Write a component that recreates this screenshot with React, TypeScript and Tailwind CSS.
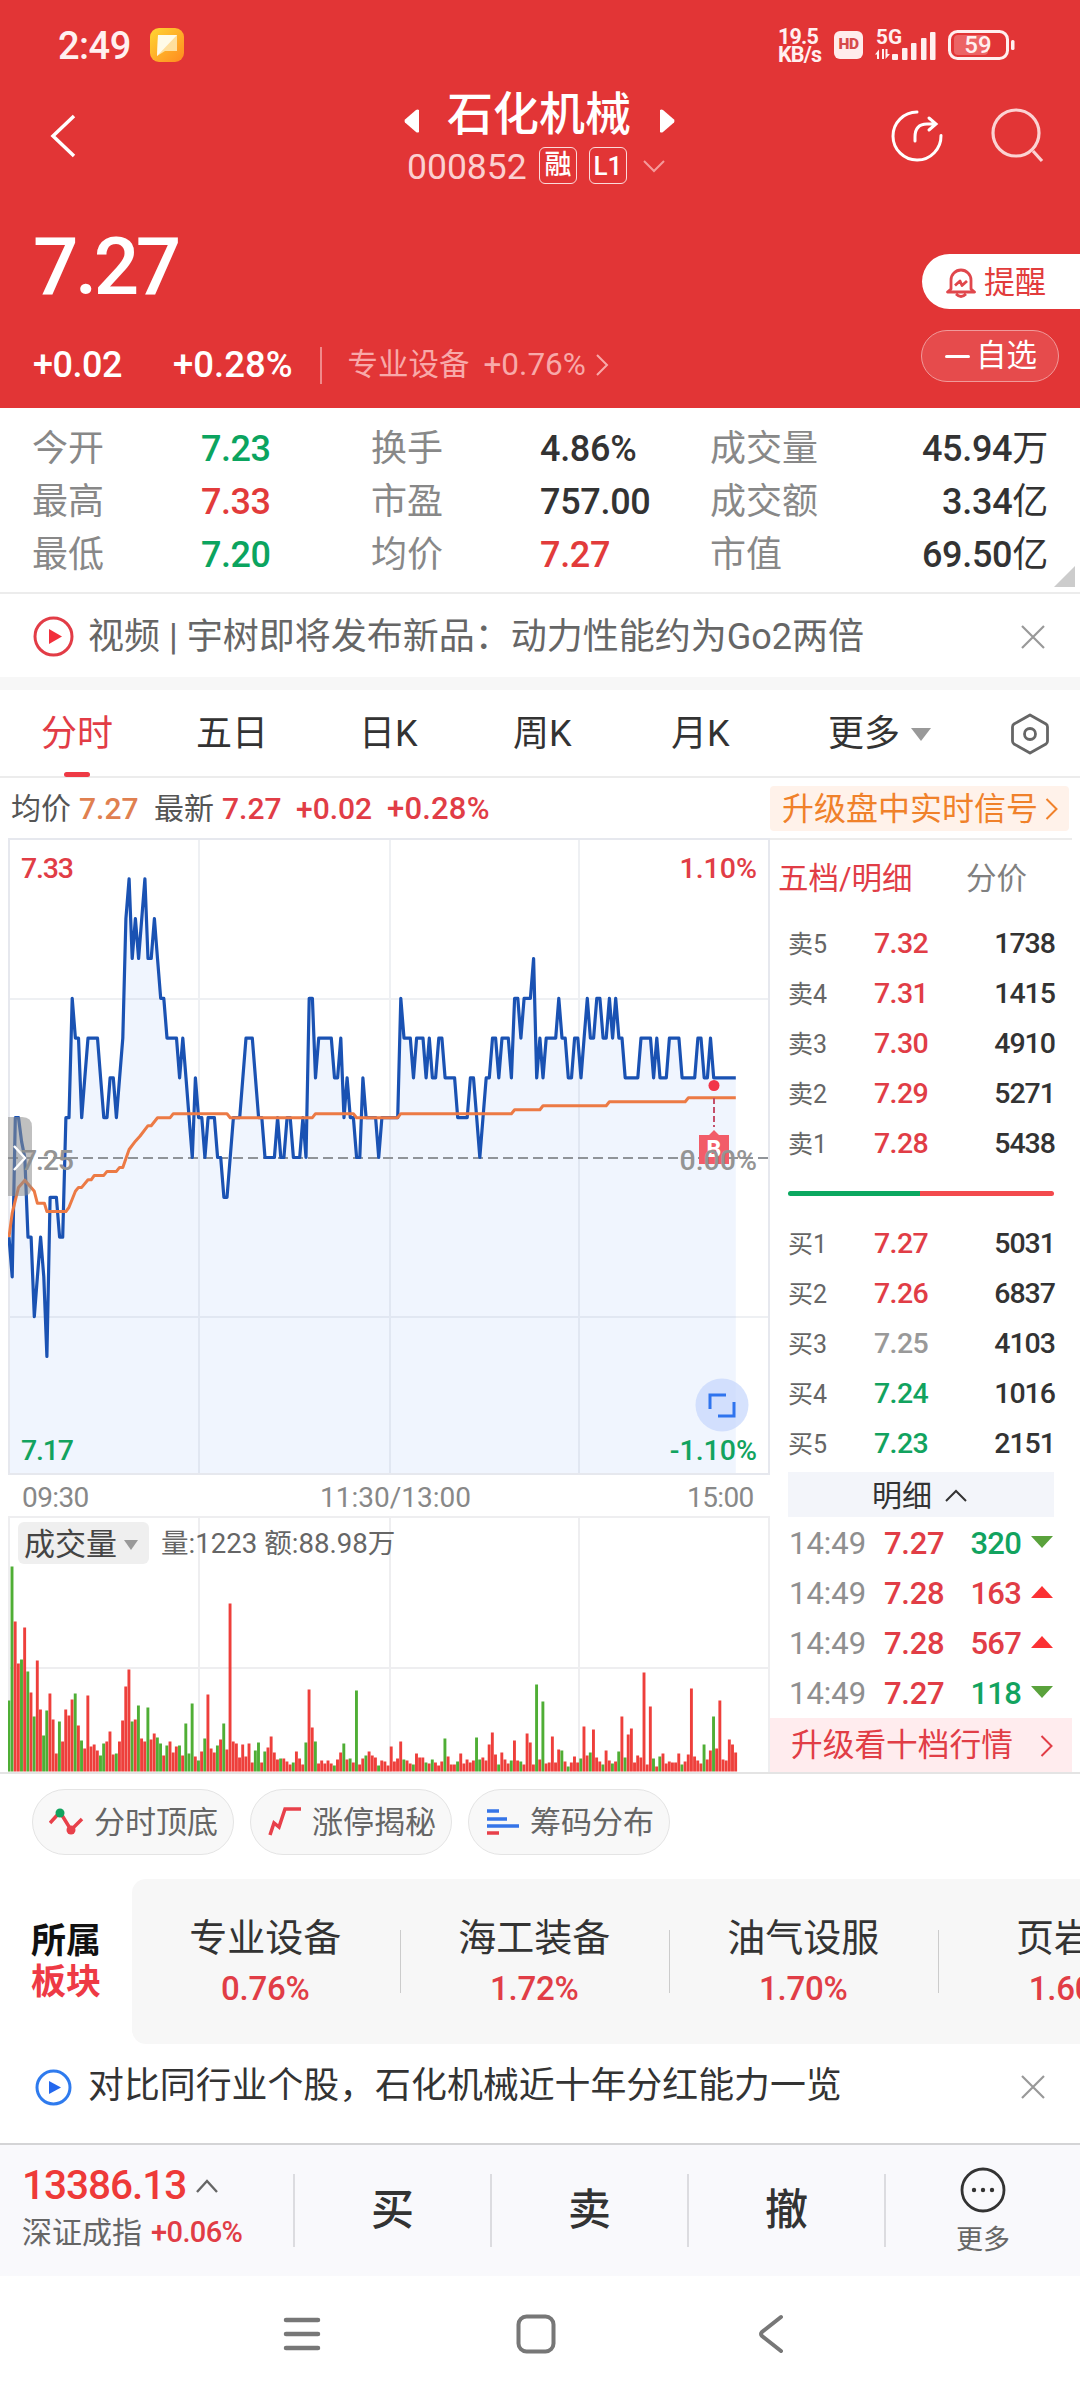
import React from "react";

// [minute of the session, ticks above/below the previous close of 7.25]
const price = [
  [0, -2], [1, -3], [2, 1], [3, 1], [4, 0.4], [5, 0], [6, -2], [7, -2], [8, -4], [9, -3], [10, -2], [11, -3], [12, -5],
  [13, -1], [15, -1], [16, -2], [17, -2], [18, 1], [19, 1], [20, 4], [21, 3], [22, 3], [23, 1], [24, 2], [25, 3], [28, 3],
  [29, 2], [30, 1], [31, 1], [32, 2], [33, 2], [34, 1], [35, 2], [36, 3], [37, 6], [38, 7], [39, 5], [40, 6], [41, 5],
  [43, 7], [44, 5], [45, 5], [46, 6], [47, 5], [48, 4], [49, 4], [50, 3], [53, 3], [54, 2], [55, 3], [56, 2], [57, 1],
  [58, 0], [59, 2], [60, 1], [61, 1], [62, 0], [63, 1], [65, 1], [66, 0], [67, 0], [68, -1], [69, -1], [71, 1], [73, 1],
  [75, 3], [77, 3], [79, 1], [80, 1], [81, 0], [84, 0], [85, 1], [86, 0], [87, 0], [88, 1], [89, 1], [90, 0], [92, 0],
  [93, 1], [94, 0], [95, 4], [96, 4], [97, 2], [98, 3], [102, 3], [103, 2], [104, 2], [105, 3], [106, 1], [107, 2],
  [108, 1], [109, 1], [110, 0], [111, 0], [112, 2], [113, 1], [116, 1], [117, 0], [118, 1], [123, 1], [124, 4],
  [125, 3], [127, 3], [128, 2], [129, 3], [131, 3], [132, 2], [133, 3], [134, 2], [135, 2], [136, 3], [137, 3],
  [138, 2], [141, 2], [142, 1], [145, 1], [146, 2], [147, 2], [148, 1], [149, 0], [150, 1], [151, 2], [152, 2],
  [153, 3], [154, 3], [155, 2], [156, 3], [158, 3], [159, 2], [160, 4], [161, 4], [162, 3], [163, 4], [165, 4],
  [166, 5], [167, 2], [168, 3], [169, 2], [170, 3], [173, 3], [174, 4], [175, 3], [176, 3], [177, 2], [178, 2],
  [179, 3], [180, 3], [181, 2], [182, 3], [183, 4], [184, 3], [185, 3], [186, 4], [187, 4], [188, 3], [189, 3],
  [190, 4], [191, 3], [192, 4], [193, 3], [194, 3], [195, 2], [199, 2], [200, 3], [203, 3], [204, 2], [205, 3],
  [206, 2], [208, 2], [209, 3], [212, 3], [213, 2], [217, 2], [218, 3], [219, 3], [220, 2], [221, 2], [222, 3],
  [223, 2], [230, 2],
];

const average = [
  [0, -2], [1, -1.4], [3, -0.75], [5, -0.57], [8, -0.85], [9, -1.15], [11.2, -1.15], [12, -1.36], [18, -1.36],
  [19, -1.25], [21, -0.85], [22, -0.75], [23, -0.75], [25, -0.56], [26, -0.56], [27, -0.45], [30, -0.45],
  [31, -0.35], [34, -0.35], [35, -0.25], [36, -0.25], [38, 0.2], [40, 0.41], [41.5, 0.54], [44, 0.8], [45, 0.8],
  [47, 1], [51, 1], [52, 1.1], [69, 1.1], [70, 1], [96, 1], [97, 1.1], [109, 1.1], [110, 1], [123, 1], [124, 1.1],
  [159, 1.1], [160, 1.2], [168, 1.2], [169, 1.3], [189, 1.3], [190, 1.4], [214, 1.4], [215, 1.5], [230, 1.5],
];

// one entry per minute, "g" marks a falling minute
const volumes = `71g 205g 150 108 112g 144 100g 79 55g 111 62 36g 61g 78 52 18 50g 30 62 56 72 78g 46 31g 23 76 25 27 21
16g 28g 30 40 17 18g 30 51 85 102 50g 52 66g 33 30 64g 32 38 34g 28g 16 26g 30 19 25 26g 16 48g 18g 68g 15
11g 20 33g 77 23 19 26g 32 48g 22 168 30 28 14 27 15 28 9 21g 29g 9 20g 24 35 19 12 13g 13 10 7
9g 20 13 7 29g 82 44 30g 8 11 8 11 8 6g 12 19 28g 12 13g 9 81g 7 13 16g 20 16 14 6g 11 10
6 25 10 13 30 12g 11 8 7g 18 14 14 9g 8 12g 9 6 10 33g 15 7 7 10g 18 8 12 9 11 34g 12g
14 11 27 39 17 7g 19 12 8 11g 31 11 10g 7 38 29 7 87g 12 70g 8 9 35 9 22 21g 10 5g 9 15
9 13g 45 16 19g 42 14 10 7g 21 11 8g 10 20g 55 14g 37 43 9 16 14 99 7 65 13g 5 15g 18 8 10
9 9 18 7g 10 17 83 15 11 8 27g 12 21 55g 23 71 12 11 32 27 19`.split(/\s+/);

const toPoints = (data: number[][]) =>
  data.map(([m, t]) => `${(1 + m * 3.16).toFixed(1)},${(319.5 - t * 39.8).toFixed(1)}`).join(" ");

const stats = [
  ["今开", "7.23", "text-[#0ba45f]", "换手", "4.86%", "text-[#333]", "成交量", "45.94万"],
  ["最高", "7.33", "text-[#e23b3b]", "市盈", "757.00", "text-[#333]", "成交额", "3.34亿"],
  ["最低", "7.20", "text-[#0ba45f]", "均价", "7.27", "text-[#e23b3b]", "市值", "69.50亿"],
];

const RED = "text-[#e13d46]";
const GREEN = "text-[#12a35f]";

const sells = [
  ["卖5", "7.32", RED, "1738"],
  ["卖4", "7.31", RED, "1415"],
  ["卖3", "7.30", RED, "4910"],
  ["卖2", "7.29", RED, "5271"],
  ["卖1", "7.28", RED, "5438"],
];

const buys = [
  ["买1", "7.27", RED, "5031"],
  ["买2", "7.26", RED, "6837"],
  ["买3", "7.25", "text-[#999]", "4103"],
  ["买4", "7.24", GREEN, "1016"],
  ["买5", "7.23", GREEN, "2151"],
];

const trades = [
  { price: "7.27", qty: "320", up: false },
  { price: "7.28", qty: "163", up: true },
  { price: "7.28", qty: "567", up: true },
  { price: "7.27", qty: "118", up: false },
];

const sectors = [
  ["专业设备", "0.76%"],
  ["海工装备", "1.72%"],
  ["油气设服", "1.70%"],
  ["页岩气", "1.60%"],
];

const StatusBar = () => (
  <div className="flex h-[90px] items-center pl-[58px] pr-[65px] font-medium text-[#fff0f0]">
    <span className="mt-[3px] w-[92px] text-[38px] tracking-[-0.5px]">2:49</span>
    <svg width="34" height="34" viewBox="0 0 34 34">
      <defs>
        <linearGradient id="note" x1="0" y1="0" x2="1" y2="1">
          <stop offset="0" stopColor="#ffd633" />
          <stop offset="1" stopColor="#ff8a1f" />
        </linearGradient>
      </defs>
      <rect width="34" height="34" rx="9" fill="url(#note)" />
      <path d="M8 7h19v16H15l-8 5z" fill="#ffdf9d" />
      <path d="M8 7h19L7 28z" fill="#fffbe8" />
    </svg>
    <div className="ml-auto mt-[2px] flex w-[56px] flex-col text-[21.500px] font-bold leading-[18px] tracking-[-0.8px]">
      <span>19.5</span>
      <span>KB/s</span>
    </div>
    <span className="flex h-[28px] w-[29px] items-center justify-center rounded-[6px] bg-[#ffecec] text-[15.500px] font-black tracking-[-0.5px] text-[#d64a4a]">
      HD
    </span>
    <svg className="ml-[12px] shrink-0" width="61" height="32" viewBox="0 0 61 32" fill="#fff0f0">
      <text x="1" y="15" fontSize="20.500" fontWeight="700" textLength="26" lengthAdjust="spacingAndGlyphs">5G</text>
      <path d="M0 25.500l4-5V30H2v-4.500zM7 20h2v10H7zM10.500 20h2v5H15l-4.500 5z" />
      <rect x="17" y="25" width="6" height="6" rx="1" />
      <rect x="27" y="19" width="5.500" height="12" rx="1" />
      <rect x="36" y="14" width="5.500" height="17" rx="1" />
      <rect x="46" y="9" width="5.500" height="22" rx="1" />
      <rect x="55" y="3" width="5.500" height="28" rx="1" />
    </svg>
    <svg className="ml-[12px] shrink-0" width="67" height="30" viewBox="0 0 67 30">
      <rect x="1.5" y="1.5" width="58" height="27" rx="8" fill="none" stroke="#fff0f0" strokeWidth="3" />
      <rect x="6" y="5" width="34" height="20" rx="4" fill="#ec6465" />
      <rect x="63" y="10" width="3.500" height="10" rx="1.500" fill="#fff0f0" />
      <text x="30" y="23" textAnchor="middle" fontSize="24" fontWeight="500" fill="#fff0f0">59</text>
    </svg>
  </div>
);

const TitleBar = () => (
  <div className="flex h-[110px] items-start text-white">
    <svg className="ml-[48px] mt-[23px] shrink-0" width="30" height="46" fill="none" stroke="#fff" strokeWidth="3.5">
      <path d="M26 3L5 23l21 20" />
    </svg>
    <div className="ml-[326px] flex w-[272px] flex-col items-center">
      <div className="flex h-[50px] w-full items-center justify-between">
        <svg width="15" height="24" className="mt-[12px]" fill="#fff"><path d="M15 1v22q-1.500 1-3 0L1 13.500q-1-1.500 0-3L12 1q1.500-1 3 0" /></svg>
        <span className="-mt-[3px] text-[46px] font-medium leading-none">石化机械</span>
        <svg width="17" height="24" className="mt-[12px]" fill="#fff"><path d="M1 1v22q1.500 1 3 0l11-9.500q1-1.500 0-3L4 1q-1.500-1-3 0" /></svg>
      </div>
      <div className="mt-[7px] flex h-[37px] w-full items-center pl-[3px] leading-none">
        <span className="mt-[4px] w-[132px] text-[35.500px] font-normal text-[#fbd0d0]">000852</span>
        <span className="flex h-[37px] w-[38px] items-center justify-center rounded-[6px] border-[1.500px] border-[#fbdada] text-[27px] font-medium">融</span>
        <span className="ml-[12px] flex h-[37px] w-[38px] items-center justify-center rounded-[6px] border-[1.500px] border-[#fbdada] text-[26px] font-medium">L1</span>
        <svg className="ml-[15px] mt-[1px]" width="24" height="13" fill="none" stroke="#f59a9a" strokeWidth="2"><path d="M2 1l10 10L22 1" /></svg>
      </div>
    </div>
    <svg className="ml-[214px] mt-[19px] shrink-0" width="54" height="54" fill="none" stroke="#fff" strokeWidth="3">
      <path d="M27 3A24 24 0 1 0 51 26.500M25 32v-4c0-9 4-13 12-13h8M39 9l7 6-7 6" strokeLinecap="round" />
    </svg>
    <svg className="ml-[46px] mt-[17px] shrink-0" width="56" height="58" fill="none" stroke="#fbd3d3" strokeWidth="3.200">
      <circle cx="26" cy="26" r="23" />
      <path d="M43 44l9 10" />
    </svg>
  </div>
);

const PriceHeader = () => (
  <div className="flex h-[208px] text-white">
    <div className="flex flex-col pl-[33px]">
      <span className="mt-[27px] text-[80px] font-medium leading-[80px] tracking-[-3.500px]">7.27</span>
      <div className="mt-[36px] flex h-[44px] items-center">
        <span className="w-[140px] text-[36px] font-medium tracking-[-0.5px]">+0.02</span>
        <span className="w-[147px] text-[36.500px] font-medium">+0.28%</span>
        <span className="h-[37px] w-[1.500px] bg-[#f08a8a]" />
        <span className="ml-[26px] text-[30.500px] text-[#f8a9a9]">专业设备</span>
        <span className="ml-[14px] text-[31.500px] text-[#f8a9a9]">+0.76%</span>
        <svg className="ml-[9px]" width="14" height="22" fill="none" stroke="#f8a9a9" strokeWidth="2"><path d="M2 1l10 10L2 21" /></svg>
      </div>
    </div>
    <div className="ml-auto flex flex-col items-end">
      <div className="mt-[54px] flex h-[55px] w-[158px] items-center rounded-l-full bg-white pl-[24px] pt-[2px] text-[31px] leading-none text-[#e23c3c]">
        <svg className="mr-[8px]" width="30" height="32" viewBox="0 0 30 32" fill="none" stroke="#e0474c" strokeWidth="2.800">
          <path d="M1.500 25l3.500-3V13a10 10 0 0 1 20 0v9l3.500 3zM10 27q5 5 10 0M9 18.500l5-4.500 2 4.500 5-4.500" strokeLinejoin="round" />
        </svg>
        提醒
      </div>
      <div className="mr-[21px] mt-[21px] flex h-[52px] w-[138px] items-center rounded-full border-[1.500px] border-[#f09a9a] bg-[#e64b4c] pl-[23px] text-[30.500px] leading-none">
        <span className="mr-[6px] h-[3px] w-[25px] rounded-full bg-white" />
        自选
      </div>
    </div>
  </div>
);

const CloseIcon = () => (
  <svg width="24" height="24" fill="none" stroke="#999" strokeWidth="2.200"><path d="M1 1l22 22M23 1L1 23" /></svg>
);

const Chevron = ({ color }: { color: string }) => (
  <svg width="13" height="22" fill="none" stroke={color} strokeWidth="2"><path d="M1.500 1l10 10-10 10" /></svg>
);

const Stats = () => (
  <div className="relative h-[184px] pt-[14px]">
    {stats.map((s) => (
      <div key={s[0]} className="flex h-[53px] items-center pl-[32px] pr-[32px] text-[36px] leading-none">
        <span className="w-[169px] text-[#888]">{s[0]}</span>
        <span className={`w-[170px] font-medium tracking-[-0.500px] ${s[2]}`}>{s[1]}</span>
        <span className="w-[169px] text-[#888]">{s[3]}</span>
        <span className={`w-[170px] font-medium tracking-[-0.300px] ${s[5]}`}>{s[4]}</span>
        <span className="text-[#888]">{s[6]}</span>
        <span className="ml-auto font-medium tracking-[-0.300px] text-[#333]">{s[7].slice(0, -1)}<span className="font-normal">{s[7].slice(-1)}</span></span>
      </div>
    ))}
    <svg className="absolute bottom-[5px] right-[5px]" width="21" height="21"><path d="M21 0v21H0z" fill="#ccc" /></svg>
  </div>
);

const Tabs = () => (
  <div className="flex h-[88px] items-center border-b-2 border-[#ececec] pt-[2px] text-[36px] leading-none text-[#333]">
    <div className="relative ml-[41px] w-[155px] text-[#e23c46]">
      分时
      <span className="absolute -bottom-[25px] left-[23px] h-[5px] w-[26px] rounded-sm bg-[#ee3a45]" />
    </div>
    <span className="w-[163px]">五日</span>
    <span className="w-[154px]">日K</span>
    <span className="w-[158px]">周K</span>
    <span className="w-[157px]">月K</span>
    <span>更多</span>
    <svg className="ml-[11px]" width="20" height="13"><path d="M0 0h20L10 13z" fill="#999" /></svg>
    <svg className="ml-[80px]" width="38" height="42" fill="none" stroke="#666" strokeWidth="2.800">
      <path d="M19 2L35 11q1.500 1 1.500 3v14q0 2-1.500 3L19 40 3 31q-1.500-1-1.500-3V14q0-2 1.500-3z" strokeLinejoin="round" />
      <circle cx="19" cy="21" r="5.500" />
    </svg>
  </div>
);

const InfoRow = () => (
  <div className="flex h-[60px] items-center pl-[11px] pr-[11px] pt-[1px] text-[30px] leading-none">
    <span className="w-[68px] text-[#555]">均价</span>
    <span className="w-[75px] font-medium text-[#e08050]">7.27</span>
    <span className="w-[68px] text-[#555]">最新</span>
    <span className={`w-[74px] font-medium ${RED}`}>7.27</span>
    <span className={`w-[91px] font-medium ${RED}`}>+0.02</span>
    <span className={`text-[31px] font-medium tracking-[0.200px] ${RED}`}>+0.28%</span>
    <div className="ml-auto flex h-[45px] w-[299px] items-center justify-between rounded-[4px] bg-[#fff2ea] pl-[12px] pr-[11px] text-[32px] text-[#f0812a]">
      升级盘中实时信号
      <Chevron color="#f0812a" />
    </div>
  </div>
);

const PriceChart = () => (
  <svg width="762" height="640" viewBox="0 0 762 640" fontSize="28.500" fontWeight="500">
    <polygon points={`1,636 ${toPoints(price)} 727.8,636`} fill="#f0f5fe" />
    <g stroke="#e6e8ee" strokeWidth="2" fill="none">
      <path d="M1 161H761M1 479H761M191 1V636M382 1V636M571 1V636" stroke="#8a94a8" strokeOpacity="0.140" />
      <rect x="1" y="1" width="760" height="635" />
    </g>
    <path d="M0 320H761" stroke="#909499" strokeWidth="2" strokeDasharray="10 5" />
    <polyline points={toPoints(price)} fill="none" stroke="#1a52b3" strokeWidth="3.200" strokeLinejoin="round" />
    <polyline points={toPoints(average)} fill="none" stroke="#ec7a45" strokeWidth="3" strokeLinejoin="round" />
    <text x="13" y="40" fill="#e13d46" textLength="53">7.33</text>
    <text x="749" y="40" textAnchor="end" fill="#e13d46">1.10%</text>
    <text x="13" y="622" fill="#12a35f" textLength="53">7.17</text>
    <text x="749" y="622" textAnchor="end" fill="#12a35f">-1.10%</text>
    <path d="M706 260V289" stroke="#c4506a" strokeWidth="2" strokeDasharray="6 3" />
    <circle cx="706" cy="247.500" r="5.500" fill="#f2364a" />
    <path d="M691 297h10l5-5 5 5h10v29h-30z" fill="#f25c69" />
    <text x="706" y="319" textAnchor="middle" fontSize="23" fontWeight="800" fill="#fff">B</text>
    <text x="13" y="332" fill="#949494" textLength="53">7.25</text>
    <text x="749" y="332" textAnchor="end" fill="#949494">0.00%</text>
    <path d="M0 279h14q10 0 10 10v59q0 10-10 10H0z" fill="#8c8c8c" fillOpacity="0.550" />
    <path d="M6 308l11 12-11 12" fill="none" stroke="#fff" strokeWidth="2.400" />
    <circle cx="714" cy="567" r="26.500" fill="#c4d6fc" fillOpacity="0.700" />
    <path d="M702 571V557H718M710 578H726V564" fill="none" stroke="#2f74ee" strokeWidth="3" />
  </svg>
);

const VolumeChart = () => (
  <div className="relative h-[256px] w-[762px]">
    <svg width="762" height="256" viewBox="0 0 762 256">
      <g stroke="#eeeef0" strokeWidth="2" fill="none">
        <path d="M1 152H761M191 1V256M382 1V256M571 1V256M1 256V1H761V256" />
      </g>
      {volumes.map((v, i) => {
        const h = parseInt(v);
        return (
          <rect
            key={i}
            x={i * 3.16 - 0.6}
            y={255.5 - h}
            width="2.900"
            height={h}
            fill={v.endsWith("g") ? "#4fae35" : "#ee3f3b"}
          />
        );
      })}
    </svg>
    <div className="absolute left-[10px] top-[6px] flex h-[42px] items-center text-[31px] leading-none">
      <div className="flex h-[42px] w-[131px] items-center rounded-[6px] bg-[#efefef] pl-[6px] pt-[2px] text-[#444]">
        成交量
        <svg className="ml-[7px] mt-[2px]" width="14" height="10"><path d="M0 0h14L7 10z" fill="#999" /></svg>
      </div>
      <span className="ml-[12px] mt-[2px] text-[27.600px] text-[#666]">量:1223 额:88.98万</span>
    </div>
  </div>
);

const BookRow = ({ row }: { row: string[] }) => (
  <div className="flex h-[50px] items-center pl-[18px] pr-[17px] pt-[1px] leading-none">
    <span className="w-[86px] text-[25px] text-[#666]">{row[0]}</span>
    <span className={`text-[28.500px] font-medium tracking-[-0.600px] ${row[2]}`}>{row[1]}</span>
    <span className="ml-auto text-[28.500px] font-medium tracking-[-1px] text-[#333]">{row[3]}</span>
  </div>
);

const OrderBook = () => (
  <div className="flex w-[302px] flex-col border-t-2 border-[#ececec]">
    <div className="flex h-[79px] items-center pl-[8px] text-[30.500px] leading-none">
      <span className={`w-[188px] ${RED}`}>五档/明细</span>
      <span className="text-[#808080]">分价</span>
    </div>
    {sells.map((r) => <BookRow key={r[0]} row={r} />)}
    <div className="flex h-[50px] items-center px-[18px] pb-[2px]">
      <span className="h-[5px] w-[132px] rounded-l-full bg-[#0ba860]" />
      <span className="h-[5px] flex-1 rounded-r-full bg-[#f34a4d]" />
    </div>
    {buys.map((r) => <BookRow key={r[0]} row={r} />)}
    <div className="mx-[18px] mt-[3px] flex h-[45px] items-center justify-center gap-[13px] bg-[#f3f5fa] pr-[3px] pt-[2px] text-[30px] leading-none text-[#333]">
      明细
      <svg width="22" height="13" fill="none" stroke="#333" strokeWidth="2"><path d="M1 12L11 2l10 10" /></svg>
    </div>
    {trades.map((t, i) => (
      <div key={i} className="flex h-[50px] items-center pl-[19px] pr-[19px] pt-[3px] text-[31px] leading-none">
        <span className="w-[95px] text-[#8f8f8f]">14:49</span>
        <span className={`font-medium tracking-[-0.300px] ${RED}`}>{t.price}</span>
        <span className={`ml-auto mr-[10px] font-medium tracking-[-0.800px] ${t.up ? RED : GREEN}`}>{t.qty}</span>
        <svg className="-mt-[3px]" width="22" height="12">
          {t.up ? <path d="M0 12h22L11 0z" fill="#fb3134" /> : <path d="M0 0h22L11 12z" fill="#5aa23c" />}
        </svg>
      </div>
    ))}
    <div className={`mt-auto flex h-[54px] items-center justify-between bg-[#ffecee] pl-[21px] pr-[19px] pt-[1px] text-[31.700px] leading-none ${RED}`}>
      升级看十档行情
      <Chevron color="#e13d46" />
    </div>
  </div>
);

const Chip = ({ icon, label }: { icon: React.ReactNode; label: string }) => (
  <div className="flex h-[66px] w-[202px] items-center rounded-full border-[1.500px] border-[#e4e4e4] bg-[#f8f8f8] pl-[16px] text-[31px] leading-none text-[#666]">
    <svg className="mr-[9px]" width="36" height="32" viewBox="0 0 36 32" fill="none" strokeWidth="3.500">{icon}</svg>
    {label}
  </div>
);

const Chips = () => (
  <div className="flex h-[105px] gap-[16px] pl-[32px] pt-[15px]">
    <Chip
      label="分时顶底"
      icon={
        <>
          <path d="M1 17l10-11 11 18 11-11" stroke="#e8404a" />
          <circle cx="11" cy="7" r="4.500" fill="#12a35f" />
          <circle cx="22" cy="24" r="4.500" fill="#e8404a" />
        </>
      }
    />
    <Chip label="涨停揭秘" icon={<path d="M3 29l4-12 5 4 6-18h16" stroke="#e8404a" />} />
    <Chip
      label="筹码分布"
      icon={
        <>
          <path d="M2 5h12M2 13h20M2 20h32" stroke="#3574e8" />
          <path d="M2 27h12" stroke="#e8404a" />
        </>
      }
    />
  </div>
);

const Sectors = () => (
  <div className="flex h-[165px]">
    <div className="flex w-[132px] shrink-0 flex-col justify-center pl-[31px] text-[35px] font-bold leading-[41px] text-[#111]">
      <span>所属</span>
      <span className="text-[#ee3a45]">板块</span>
    </div>
    <div className="flex flex-1 overflow-hidden rounded-l-[14px] bg-[#f7f7f7]">
      {sectors.map(([name, pct], i) => (
        <div key={name} className="flex w-[269px] shrink-0 items-center">
          <div className="flex flex-1 flex-col items-center pr-[1px] leading-none">
            <span className="text-[38px] text-[#333]">{name}</span>
            <span className={`mt-[15px] text-[33px] font-medium tracking-[-0.200px] ${RED}`}>{pct}</span>
          </div>
          {i < 3 && <span className="h-[63px] w-[1.500px] bg-[#ccc]" />}
        </div>
      ))}
    </div>
  </div>
);

const BottomBar = () => (
  <div className="flex h-[133px] items-center border-t-2 border-[#d4d4d6] bg-[#f9f9fc] leading-none">
    <div className="-mt-[8px] flex w-[293px] shrink-0 flex-col pl-[22px]">
      <div className="flex items-center text-[40.500px] font-medium tracking-[-1px] text-[#ee3a38]">
        13386.13
        <svg className="ml-[9px]" width="24" height="14" fill="none" stroke="#666" strokeWidth="2.400"><path d="M2 13L12 2l10 11" /></svg>
      </div>
      <div className="mt-[12px] flex items-center text-[30px] text-[#666]">
        深证成指
        <span className={`ml-[9px] text-[29px] font-medium tracking-[-0.600px] ${RED}`}>+0.06%</span>
      </div>
    </div>
    {["买", "卖", "撤"].map((a) => (
      <div key={a} className="flex h-[73px] w-[197px] shrink-0 items-center justify-center border-l-2 border-[#dcdce0] text-[43px] font-medium text-[#333]">
        {a}
      </div>
    ))}
    <div className="flex h-[73px] flex-1 items-center justify-center border-l-2 border-[#dcdce0]">
      <div className="flex shrink-0 flex-col items-center text-[27px] text-[#666]">
        <svg className="shrink-0" width="46" height="46" fill="#333">
          <circle cx="23" cy="23" r="21" fill="none" stroke="#333" strokeWidth="2.800" />
          <circle cx="14" cy="23" r="2.200" />
          <circle cx="23" cy="23" r="2.200" />
          <circle cx="32" cy="23" r="2.200" />
        </svg>
        <span className="mt-[14px]">更多</span>
      </div>
    </div>
  </div>
);

const NavBar = () => (
  <div className="flex h-[123px] items-center pb-[7px] pl-[283px]">
    <svg width="38" height="38" stroke="#777" strokeWidth="4.500" strokeLinecap="round"><path d="M3 5h32M3 19h32M3 33h32" /></svg>
    <svg className="ml-[195px]" width="40" height="40" fill="none" stroke="#777" strokeWidth="4"><rect x="2.500" y="2.500" width="35" height="35" rx="8" /></svg>
    <svg className="ml-[201px]" width="28" height="42" fill="none" stroke="#777" strokeWidth="4" strokeLinecap="round" strokeLinejoin="round"><path d="M24 4L5 19q-2 2 0 4l19 15" /></svg>
  </div>
);

const App = () => {
  return (
    <div className="h-[2400px] w-[1080px] overflow-hidden bg-white font-[Roboto,'Noto_Sans_CJK_SC',sans-serif]">
      <div className="h-[408px] bg-[#e23536]">
        <StatusBar />
        <TitleBar />
        <PriceHeader />
      </div>
      <Stats />

      {/* Video news strip */}
      <div className="flex h-[98px] items-center border-t-2 border-[#ececec] bg-white pb-[11px] pl-[33px] pr-[35px] text-[36px] leading-none text-[#666]">
        <svg className="mr-[14px]" width="41" height="41">
          <circle cx="20.500" cy="20.500" r="18.500" fill="none" stroke="#e23c46" strokeWidth="3" />
          <path d="M16 13l13 7.500L16 28z" fill="#f2303c" />
        </svg>
        <span className="mr-auto whitespace-nowrap">视频 | 宇树即将发布新品：动力性能约为Go2两倍</span>
        <CloseIcon />
      </div>
      <div className="-mt-[13px] h-[13px] bg-[#f7f7f7]" />

      <Tabs />
      <InfoRow />

      {/* Charts on the left, order book on the right */}
      <div className="flex border-b-2 border-[#e4e4e4] pl-[8px]">
        <div className="flex w-[762px] flex-col">
          <PriceChart />
          <div className="flex h-[38px] items-center pl-[14px] pt-[1px] text-[28px] leading-none text-[#888]">
            <span className="w-[298px] tracking-[-0.600px]">09:30</span>
            <span className="w-[367px]">11:30/13:00</span>
            <span className="tracking-[-0.600px]">15:00</span>
          </div>
          <VolumeChart />
        </div>
        <OrderBook />
      </div>

      <Chips />
      <Sectors />

      {/* Dividend article strip */}
      <div className="flex h-[99px] items-center pb-[13px] pl-[33px] pr-[35px] text-[35.900px] leading-none text-[#333]">
        <svg className="mr-[14px]" width="41" height="41">
          <circle cx="20.500" cy="20.500" r="16.500" fill="none" stroke="#2f7bee" strokeWidth="3" />
          <path d="M16 14l12 6.500L16 27z" fill="#2468ee" />
        </svg>
        <span className="mr-auto whitespace-nowrap">对比同行业个股，石化机械近十年分红能力一览</span>
        <CloseIcon />
      </div>

      <BottomBar />
      <NavBar />
    </div>
  );
};

export default App;
